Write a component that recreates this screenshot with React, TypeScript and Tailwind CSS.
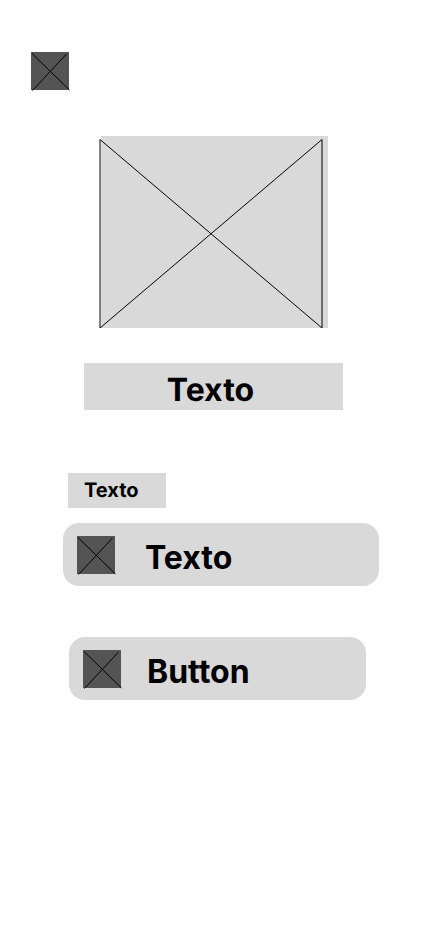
function CrossIcon() {
  return (
    <svg
      className="block size-10 shrink-0"
      viewBox="0 0 40 40"
      fill="none"
      stroke="#000"
      aria-hidden="true"
    >
      <rect width="38" height="38" fill="#545454" stroke="none" />
      <path d="M1 1.5 38.5 38M35.5 2 1.5 38.5" />
    </svg>
  );
}

function PicturePlaceholder() {
  return (
    <svg
      className="block h-48 w-57 overflow-visible"
      viewBox="0 0 228 192"
      fill="none"
      stroke="#000"
      role="img"
      aria-label="Imagen"
    >
      <rect x="1" width="227" height="192" fill="#d9d9d9" stroke="none" />
      <path d="M0 3.5 222 192V3.5L0 192Z" strokeLinejoin="bevel" />
    </svg>
  );
}

export default function App() {
  return (
    <main className="min-h-screen bg-white pt-13 pb-8 font-['Inter',sans-serif] text-black [text-rendering:geometricPrecision]">
      <button type="button" aria-label="Volver" className="ml-[31px] block">
        <CrossIcon />
      </button>

      <div className="mt-11 flex justify-center">
        <PicturePlaceholder />
      </div>

      <h1 className="mr-[85px] ml-[84px] mt-[35px] bg-[#d9d9d9] pt-[7px] pr-1.5 text-center text-[32px] leading-10 font-bold">
        Texto
      </h1>

      <form className="mt-[63px]" onSubmit={(event) => event.preventDefault()}>
        <label
          htmlFor="campo"
          className="ml-[68px] block h-[35px] w-[98px] bg-[#d9d9d9] pt-[5px] pl-4 text-xl leading-6 font-bold"
        >
          Texto
        </label>

        <div className="mt-[15px] mr-[49px] ml-[63px] flex h-[63px] items-center gap-7 rounded-2xl bg-[#d9d9d9] px-3.5 pt-0.5">
          <CrossIcon />
          <input
            id="campo"
            type="text"
            defaultValue="Texto"
            className="min-w-0 flex-1 bg-transparent pt-1 text-[32px] leading-10 font-bold outline-none"
          />
        </div>

        <button
          type="submit"
          className="mt-[51px] mr-[62px] ml-[69px] flex h-[63px] w-[calc(100%-131px)] items-center gap-6 rounded-2xl bg-[#d9d9d9] px-3.5 pt-0.5 text-left text-[32px] leading-10 font-bold"
        >
          <CrossIcon />
          <span className="pt-1">Button</span>
        </button>
      </form>
    </main>
  );
}
